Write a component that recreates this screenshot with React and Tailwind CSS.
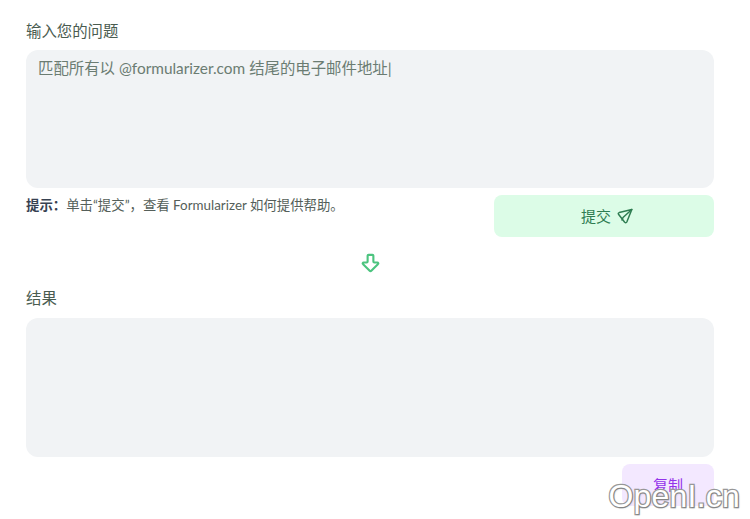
import { ArrowBigDown } from 'lucide-react';

const fontStack = { fontFamily: '"Lato", "Noto Sans CJK SC", sans-serif' };

const PlaneIcon = () => (
  <svg className="h-4 w-4" viewBox="0 0 16 16" fill="none" stroke="currentColor" strokeWidth="1.5" strokeLinejoin="round" strokeLinecap="round">
    <path d="M14.8 1.5 2.2 4.6 Q0.8 5 1.5 6.2 L7.5 14 Q9 15.4 9.8 14 Z" />
    <path d="M14.8 1.5 6 9.5 5 12" />
  </svg>
);

const App = () => {
  return (
    <div className="relative h-[519px] w-[750px] overflow-hidden bg-white" style={fontStack}>
      <div className="flex flex-col pl-[26px] pr-[36px] pt-[20px]">
        {/* Question */}
        <label className="text-[15.4px] leading-[22px] text-[#4a5c50]">输入您的问题</label>
        <div className="mt-[8px] h-[138px] rounded-xl bg-[#f1f3f5] px-3 py-[8px] text-[15.4px] leading-[20px] text-[#6b7c72]">
          匹配所有以 @formularizer.com 结尾的电子邮件地址|
        </div>

        {/* Hint and submit */}
        <div className="mt-[7px] flex items-start justify-between">
          <p className="text-[13.4px] leading-[20px] text-[#555f5a]">
            <span className="font-bold text-[#374151]">提示：</span>单击“提交”，查看 Formularizer 如何提供帮助。
          </p>
          <button className="flex h-[42px] w-[220px] items-center justify-center gap-[6px] rounded-lg bg-[#dcfce7] pl-[6px] text-[15px] text-[#2f7d52]">
            提交
            <PlaneIcon />
          </button>
        </div>

        {/* Arrow */}
        <div className="mt-[14px] flex justify-center">
          <ArrowBigDown className="h-[23px] w-[23px] text-[#4cc47f]" strokeWidth={2.2} />
        </div>

        {/* Result */}
        <label className="mt-[13px] text-[15.4px] leading-[22px] text-[#4a5c50]">结果</label>
        <div className="mt-[9px] h-[139px] rounded-xl bg-[#f1f3f5]" />
        <div className="mt-[7px] flex justify-end">
          <button className="h-[42px] w-[92px] rounded-lg bg-[#f3e8ff] text-[15px] text-[#9333ea]">复制</button>
        </div>
      </div>

      {/* Watermark */}
      <div
        className="absolute bottom-[7px] right-[10px] text-[32px] leading-none tracking-[0.2px] text-white [paint-order:stroke] [-webkit-text-stroke:2.5px_#999999] [text-shadow:1px_1px_2px_rgba(0,0,0,0.2)]"
        style={{ fontFamily: '"Liberation Sans", sans-serif' }}
      >
        OpenI.cn
      </div>
    </div>
  );
};

export default App;
